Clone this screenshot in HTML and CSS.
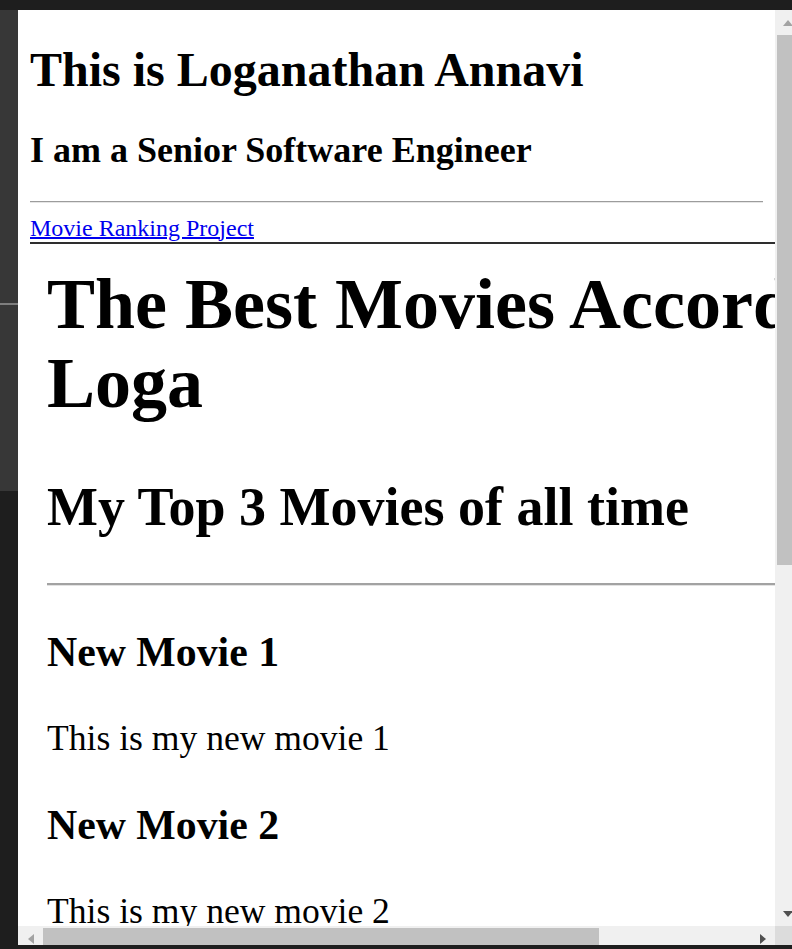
FILE: index.html
```html
<!DOCTYPE html>
<html>
<head>
<meta charset="utf-8">
<title>Loganathan Annavi</title>
<link rel="stylesheet" href="styles.css">
</head>
<body>
<div class="app">
  <div class="topbar"></div>
  <div class="sidebar">
    <div class="side-a"></div>
    <div class="side-line"></div>
    <div class="side-b"></div>
    <div class="side-c"></div>
  </div>
  <div class="window">
    <div class="viewport">
      <div class="page">
        <h1 class="title">This is Loganathan Annavi</h1>
        <h2 class="subtitle">I am a Senior Software Engineer</h2>
        <hr class="rule">
        <a class="link" href="#">Movie Ranking Project</a>
        <div class="frame">
          <h1 class="f-title">The Best Movies According to Loga</h1>
          <h2 class="f-sub">My Top 3 Movies of all time</h2>
          <hr class="f-rule">
          <h3 class="f-movie">New Movie 1</h3>
          <p class="f-text">This is my new movie 1</p>
          <h3 class="f-movie">New Movie 2</h3>
          <p class="f-text">This is my new movie 2</p>
          <h3 class="f-movie">New Movie 3</h3>
          <p class="f-text">This is my new movie 3</p>
        </div>
      </div>
    </div>
    <div class="vscroll">
      <div class="sb-btn"><span class="arr-up"></span></div>
      <div class="vtrack"><div class="vthumb"></div></div>
      <div class="sb-btn"><span class="arr-down"></span></div>
    </div>
    <div class="hscroll">
      <div class="sb-btn"><span class="arr-left"></span></div>
      <div class="htrack"><div class="hthumb"></div></div>
      <div class="sb-btn"><span class="arr-right"></span></div>
    </div>
    <div class="corner"></div>
  </div>
</div>
</body>
</html>
```
FILE: styles.css
```css
html, body {
  margin: 0;
  padding: 0;
  overflow: hidden;
  background: #1e1e1e;
  height: 949px;
}

.app {
  display: grid;
  grid-template-columns: 18px 782px;
  grid-template-rows: 10px 935px;
  width: 800px;
}

.topbar {
  grid-column: 1 / 3;
  background: #1e1e1e;
}

.sidebar {
  display: flex;
  flex-direction: column;
}
.side-a { height: 293px; background: #373737; }
.side-line { height: 2px; background: #7e7e7e; }
.side-b { height: 186px; background: #373737; }
.side-c { flex: 1; background: #1e1e1e; }

.window {
  display: grid;
  grid-template-columns: 757px 25px;
  grid-template-rows: 916px 19px;
  overflow: hidden;
}

.viewport {
  background: #ffffff;
  overflow: hidden;
}

.page {
  padding: 0 12px;
  font-family: "Liberation Serif", "Times New Roman", serif;
  font-size: 24px;
  color: #000;
}

.title {
  font-size: 48px;
  margin: 32px 0;
}
.subtitle {
  font-size: 36px;
  margin: 30px 0;
}
.rule {
  margin: 12px 0;
  border: 0;
  border-top: 1px solid #9c9c9c;
  border-bottom: 1px solid #e6e6e6;
}
.link {
  color: #0000ee;
  text-decoration: underline;
  text-decoration-thickness: 2px;
}

.frame {
  width: 1000px;
  border-top: 2px solid #2e2e2e;
  padding: 0 17px;
  font-size: 35.6px;
}
.f-title {
  font-size: 72px;
  line-height: 79px;
  margin: 20.5px 0 53px;
}
.f-sub {
  font-size: 54px;
  margin: 0 0 45.5px;
}
.f-rule {
  margin: 0;
  border: 0;
  border-top: 2px solid #a2a2a2;
  border-bottom: 1px solid #e2e2e2;
}
.f-movie {
  font-size: 41.8px;
  margin: 41.6px 0;
}
.f-text {
  margin: 35.6px 0;
}

/* scrollbars */
.vscroll {
  background: #f0f0f0;
  display: flex;
  flex-direction: column;
}
.sb-btn {
  width: 25px;
  height: 25px;
  flex: none;
  display: flex;
  align-items: center;
  justify-content: center;
}
.vtrack {
  flex: 1;
}
.vthumb {
  margin-left: 2px;
  width: 21px;
  height: 530px;
  background: #c1c1c1;
}
.hscroll {
  background: #f0f0f0;
  display: flex;
  align-items: flex-start;
  overflow: hidden;
}
.htrack {
  flex: 1;
  height: 25px;
}
.hthumb {
  margin-top: 2px;
  width: 556px;
  height: 21px;
  background: #c1c1c1;
}
.corner {
  background: #dcdcdc;
}

.arr-up {
  width: 0; height: 0;
  border-left: 5px solid transparent;
  border-right: 5px solid transparent;
  border-bottom: 6px solid #a3a3a3;
}
.arr-down {
  width: 0; height: 0;
  border-left: 5px solid transparent;
  border-right: 5px solid transparent;
  border-top: 6px solid #505050;
}
.arr-left {
  width: 0; height: 0;
  border-top: 5px solid transparent;
  border-bottom: 5px solid transparent;
  border-right: 6px solid #a3a3a3;
}
.arr-right {
  width: 0; height: 0;
  border-top: 5px solid transparent;
  border-bottom: 5px solid transparent;
  border-left: 6px solid #505050;
}
```
